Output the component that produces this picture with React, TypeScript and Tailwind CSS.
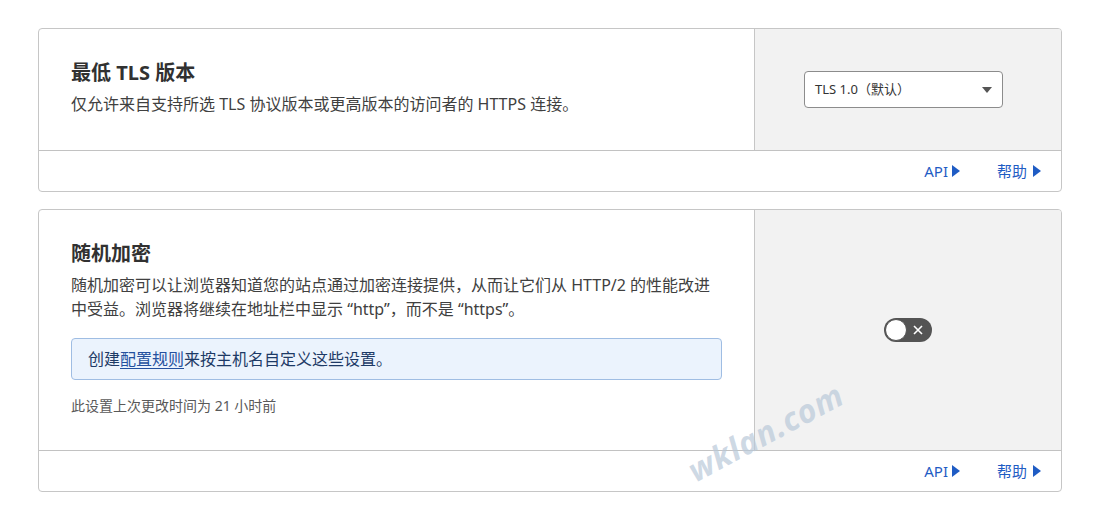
import { type ReactNode } from "react";

function FooterLinks() {
  return (
    <div className="flex h-[41px] items-center justify-end gap-[37px] border-t border-[#c2c2c2] pr-[20px] text-[15px] text-[#1f5cc4]">
      <a href="#" className="flex items-center gap-[4px]">
        API
        <svg width="8" height="12" viewBox="0 0 8 12">
          <path d="M0 0 L8 6 L0 12 Z" fill="currentColor" />
        </svg>
      </a>
      <a href="#" className="flex items-center gap-[6px]">
        帮助
        <svg width="8" height="12" viewBox="0 0 8 12">
          <path d="M0 0 L8 6 L0 12 Z" fill="currentColor" />
        </svg>
      </a>
    </div>
  );
}

function SettingCard({ children, control }: { children: ReactNode; control: ReactNode }) {
  return (
    <section className="overflow-hidden rounded-[4px] border border-[#c6c6c6] bg-white">
      <div className="flex">
        <div className="flex-1 px-[32px] pt-[30px] pb-[34px]">{children}</div>
        <div className="flex w-[307px] shrink-0 items-center justify-center border-l border-[#c6c6c6] bg-[#f2f2f2]">
          {control}
        </div>
      </div>
      <FooterLinks />
    </section>
  );
}

export default function App() {
  return (
    <main
      className="relative min-h-screen bg-white pt-[28px] pl-[38px]"
      style={{ fontFamily: '"Noto Sans", "Noto Sans CJK SC", sans-serif' }}
    >
      <div className="flex w-[1024px] flex-col gap-[17px]">
        <SettingCard
          control={
            <div className="mr-[9px] flex h-[37px] w-[199px] items-center justify-between rounded-[4px] border border-[#8c8c8c] bg-white pl-[10px] pr-[10px] text-[13px] text-[#333]">
              <span>TLS 1.0（默认）</span>
              <svg width="10" height="6" viewBox="0 0 10 6">
                <path d="M0 0 L10 0 L5 6 Z" fill="#555" />
              </svg>
            </div>
          }
        >
          <h2 className="text-[20px] font-bold leading-7 text-[#313131]">最低 TLS 版本</h2>
          <p className="mt-[5px] text-[16px] leading-6 text-[#404040]">
            仅允许来自支持所选 TLS 协议版本或更高版本的访问者的 HTTPS 连接。
          </p>
        </SettingCard>

        <SettingCard
          control={
            <button
              type="button"
              className="relative flex h-[24px] w-[48px] items-center rounded-full bg-[#545454]"
            >
              <span className="ml-[1px] h-[22px] w-[22px] rounded-full border border-[#545454] bg-white" />
              <svg className="absolute right-[9px]" width="10" height="10" viewBox="0 0 10 10">
                <path d="M1 1 L9 9 M9 1 L1 9" stroke="white" strokeWidth="1.6" />
              </svg>
            </button>
          }
        >
          <h2 className="text-[20px] font-bold leading-7 text-[#313131]">随机加密</h2>
          <p className="mt-[5px] max-w-[646px] text-[16px] leading-6 text-[#404040]">
            随机加密可以让浏览器知道您的站点通过加密连接提供，从而让它们从 HTTP/2 的性能改进中受益。浏览器将继续在地址栏中显示 “http”，而不是 “https”。
          </p>
          <div className="mt-[17px] flex h-[42px] items-center rounded-[4px] border border-[#9fbde3] bg-[#ebf3fd] px-[16px] text-[16px] text-[#1d3a66]">
            创建
            <a href="#" className="text-[#24509e] underline underline-offset-[3px]">
              配置规则
            </a>
            来按主机名自定义这些设置。
          </div>
          <p className="mt-[16px] text-[14px] leading-5 text-[#595959]">此设置上次更改时间为 21 小时前</p>
        </SettingCard>
      </div>

      <div className="pointer-events-none absolute left-[680px] top-[408px] -rotate-[28deg] text-[32px] font-bold italic tracking-wide text-[#b9c8d9]/70">
        wklan.com
      </div>
    </main>
  );
}
